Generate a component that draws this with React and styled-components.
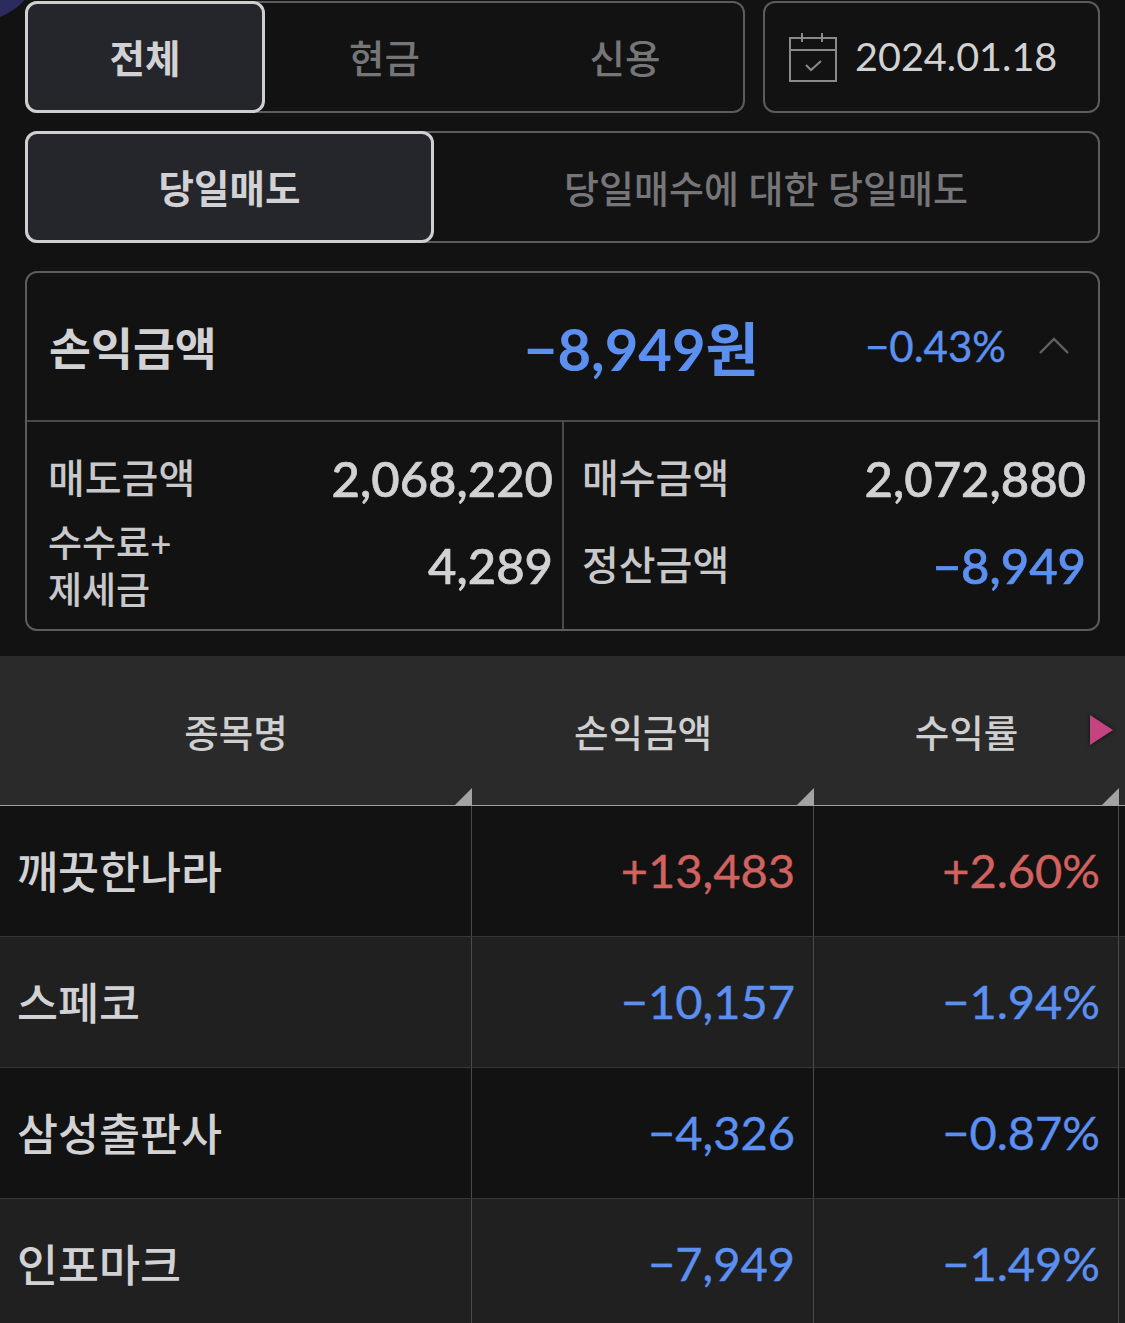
import React from "react";
import styled, { createGlobalStyle } from "styled-components";

const GlobalStyle = createGlobalStyle`
  html, body { margin: 0; padding: 0; background: #121213; }
  body { font-family: Lato, "Noto Sans CJK KR", "Noto Sans", sans-serif; overflow: hidden; }
`;

const Page = styled.div`
  position: relative;
  width: 1125px;
  height: 1323px;
  overflow: hidden;
  background: #121213;
`;

const Blob = styled.div`
  position: absolute;
  left: -84px;
  top: -103px;
  width: 124px;
  height: 124px;
  border-radius: 50%;
  background: #2b2b60;
`;

const Top = styled.div`
  position: relative;
  display: flex;
  flex-direction: column;
  padding: 1px 25px 0;
`;

const Row = styled.div`
  display: flex;
  gap: 18px;
  margin-bottom: 18px;
`;

const Segment = styled.div`
  display: grid;
  flex: 1;
  height: 112px;
  box-sizing: border-box;
  grid-template-columns: ${(p) => p.$cols};
  border: 2px solid #5c5c5e;
  border-radius: 12px;
`;

const SegButton = styled.div`
  display: flex;
  align-items: center;
  justify-content: center;
  margin: ${(p) => (p.$active ? "-2px 0 -2px -2px" : "0")};
  padding: 0 0 2px ${(p) => p.$pl || 0}px;
  font-size: ${(p) => p.$size || 38.6}px;
  font-weight: ${(p) => (p.$active ? 700 : 500)};
  color: ${(p) => (p.$active ? "#d2d2d4" : "#767678")};
  background: ${(p) => (p.$active ? "#25262c" : "transparent")};
  border: ${(p) => (p.$active ? "3px solid #cfcfd0" : "none")};
  border-radius: ${(p) => (p.$active ? "12px" : "0")};
`;

const DateBox = styled.div`
  display: flex;
  align-items: center;
  box-sizing: border-box;
  width: 337px;
  height: 112px;
  padding-left: 24px;
  gap: 18px;
  border: 2px solid #5c5c5e;
  border-radius: 12px;
  color: #d2d2d4;
  font-size: 39.6px;
`;

const DateText = styled.span`
  padding-bottom: 3px;
`;

const Summary = styled.div`
  box-sizing: border-box;
  height: 360px;
  margin-top: 10px;
  border: 2px solid #5c5c5e;
  border-radius: 12px;
`;

const SummaryHead = styled.div`
  display: flex;
  align-items: center;
  box-sizing: border-box;
  height: 149px;
  padding: 0 28px 2px 22px;
  border-bottom: 2px solid #4a4a4c;
`;

const HeadLabel = styled.div`
  flex: 1;
  font-size: 45.6px;
  font-weight: 700;
  color: #d2d2d4;
`;

const HeadValue = styled.div`
  font-size: 58px;
  font-weight: 700;
  color: #5b8ff0;
`;

const HeadRate = styled.div`
  margin: 0 32px 0 106px;
  font-size: 42px;
  color: #5b8ff0;
  -webkit-text-stroke: 0.4px #5b8ff0;
`;

const SummaryBody = styled.div`
  display: grid;
  grid-template-columns: 537px 1fr;
  height: 207px;
`;

const SummaryCol = styled.div`
  display: flex;
  flex-direction: column;
  padding: 13px ${(p) => p.$right}px 0 ${(p) => p.$left}px;
  border-right: ${(p) => (p.$divider ? "2px solid #4a4a4c" : "none")};
`;

const SummaryLine = styled.div`
  display: flex;
  align-items: center;
  justify-content: space-between;
  height: 87px;
`;

const SummaryLabel = styled.div`
  font-size: 40px;
  line-height: 47px;
  font-weight: 500;
  color: #c8c8ca;
`;

const SmallLabel = styled(SummaryLabel)`
  font-size: 37px;
`;

const SummaryValue = styled.div`
  padding-bottom: 2px;
  font-size: 49px;
  font-weight: 500;
  color: ${(p) => (p.$blue ? "#5b8ff0" : "#d2d2d4")};
  -webkit-text-stroke: 0.7px ${(p) => (p.$blue ? "#5b8ff0" : "#d2d2d4")};
`;

const Table = styled.div`
  position: absolute;
  left: 0;
  top: 656px;
  width: 1125px;
`;

const HeaderRow = styled.div`
  position: relative;
  display: grid;
  grid-template-columns: 472px 342px 305px 6px;
  height: 150px;
  background: #2a2a2b;
  border-bottom: 1px solid #a0a0a0;
  box-sizing: border-box;
`;

const HeaderCell = styled.div`
  position: relative;
  display: flex;
  align-items: center;
  justify-content: center;
  font-size: 37.5px;
  font-weight: 500;
  color: #cfcfd0;
`;

const Corner = styled.span`
  position: absolute;
  right: 0;
  bottom: 0;
  width: 0;
  height: 0;
  border-left: 17px solid transparent;
  border-bottom: 17px solid #a3a3a3;
`;

const Arrow = styled.span`
  position: absolute;
  right: 12px;
  top: 59px;
  width: 0;
  height: 0;
  border-top: 15px solid transparent;
  border-bottom: 15px solid transparent;
  border-left: 23px solid #c4447f;
  filter: drop-shadow(0 0 2px #0c0c0c);
`;

const BodyRow = styled.div`
  display: grid;
  grid-template-columns: 472px 342px 305px 6px;
  height: 131px;
  box-sizing: border-box;
  background: ${(p) => (p.$alt ? "#202021" : "#121213")};
  border-bottom: 1px solid #373738;
`;

const NameCell = styled.div`
  display: flex;
  align-items: center;
  padding: 0 0 3px 17px;
  font-size: 44.6px;
  font-weight: 500;
  color: #d2d2d4;
  border-right: 1px solid #4a4a4c;
`;

const NumCell = styled.div`
  display: flex;
  align-items: center;
  justify-content: flex-end;
  padding: 0 18px 2px 0;
  font-size: 47px;
  color: ${(p) => (p.$up ? "#d2625f" : "#5b8ff0")};
  -webkit-text-stroke: 0.4px ${(p) => (p.$up ? "#d2625f" : "#5b8ff0")};
  border-right: 1px solid #4a4a4c;
`;

const Filler = styled.div``;

const CalendarIcon = () => (
  <svg width="48" height="50" viewBox="0 0 48 50" fill="none" stroke="#8a8a8c" strokeWidth="2">
    <path d="M1 6h46v43h-46z M1 18h46 M13 1v9 M33 1v9" />
    <path d="M17 33l5 5 10-9" />
  </svg>
);

const ChevronUp = () => (
  <svg width="32" height="18" viewBox="0 0 32 18" fill="none" stroke="#626264" strokeWidth="2.4">
    <path d="M2 16L16 2l14 14" />
  </svg>
);

const rows = [
  { name: "깨끗한나라", amount: "+13,483", rate: "+2.60%", up: true },
  { name: "스페코", amount: "−10,157", rate: "−1.94%" },
  { name: "삼성출판사", amount: "−4,326", rate: "−0.87%" },
  { name: "인포마크", amount: "−7,949", rate: "−1.49%" },
];

export default function App() {
  return (
    <Page>
      <GlobalStyle />
      <Blob />
      <Top>
        <Row>
          <Segment $cols="238px 1fr 1fr">
            <SegButton $active>전체</SegButton>
            <SegButton>현금</SegButton>
            <SegButton $pl={3}>신용</SegButton>
          </Segment>
          <DateBox>
            <CalendarIcon />
            <DateText>2024.01.18</DateText>
          </DateBox>
        </Row>
        <Row>
          <Segment $cols="407px 1fr">
            <SegButton $active>당일매도</SegButton>
            <SegButton $size={38}>당일매수에 대한 당일매도</SegButton>
          </Segment>
        </Row>
        <Summary>
          <SummaryHead>
            <HeadLabel>손익금액</HeadLabel>
            <HeadValue>−8,949원</HeadValue>
            <HeadRate>−0.43%</HeadRate>
            <ChevronUp />
          </SummaryHead>
          <SummaryBody>
            <SummaryCol $divider $left={21} $right={9}>
              <SummaryLine>
                <SummaryLabel>매도금액</SummaryLabel>
                <SummaryValue>2,068,220</SummaryValue>
              </SummaryLine>
              <SummaryLine>
                <SmallLabel>수수료+<br />제세금</SmallLabel>
                <SummaryValue>4,289</SummaryValue>
              </SummaryLine>
            </SummaryCol>
            <SummaryCol $left={18} $right={12}>
              <SummaryLine>
                <SummaryLabel>매수금액</SummaryLabel>
                <SummaryValue>2,072,880</SummaryValue>
              </SummaryLine>
              <SummaryLine>
                <SummaryLabel>정산금액</SummaryLabel>
                <SummaryValue $blue>−8,949</SummaryValue>
              </SummaryLine>
            </SummaryCol>
          </SummaryBody>
        </Summary>
      </Top>
      <Table>
        <HeaderRow>
          <HeaderCell>종목명<Corner /></HeaderCell>
          <HeaderCell>손익금액<Corner /></HeaderCell>
          <HeaderCell>수익률<Corner /></HeaderCell>
          <Filler />
          <Arrow />
        </HeaderRow>
        {rows.map((r, i) => (
          <BodyRow key={r.name} $alt={i % 2 === 1}>
            <NameCell>{r.name}</NameCell>
            <NumCell $up={r.up}>{r.amount}</NumCell>
            <NumCell $up={r.up}>{r.rate}</NumCell>
            <Filler />
          </BodyRow>
        ))}
      </Table>
    </Page>
  );
}
